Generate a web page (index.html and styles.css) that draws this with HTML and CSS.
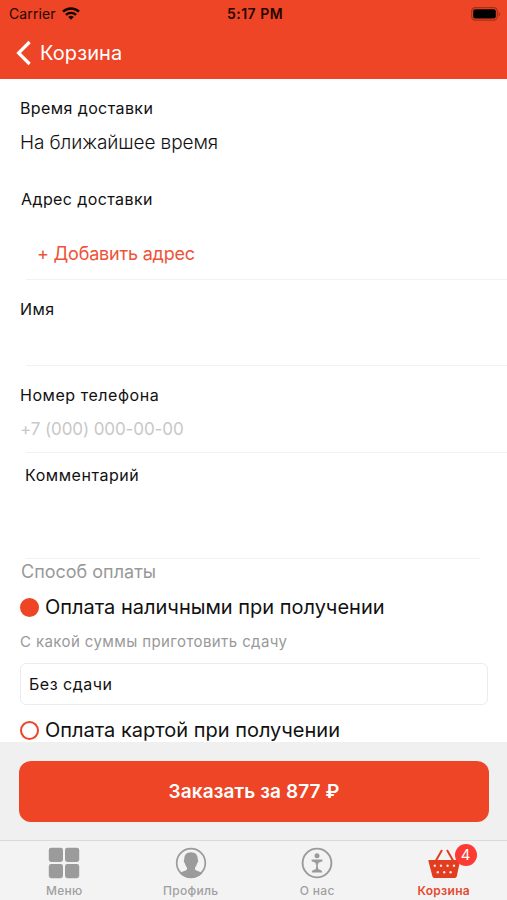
FILE: index.html
```html
<!DOCTYPE html>
<html lang="ru">
<head>
	<meta charset="UTF-8">
	<title>Корзина</title>
	<link rel="stylesheet" href="styles.css">
</head>
<body>
	<div class="app">
		<header class="header">
			<div class="status">
				<div class="carrier">
					<span>Carrier</span>
					<svg class="wifi" width="18" height="13" viewBox="0 0 18 13">
						<path d="M1 4.7a11.7 11.7 0 0 1 16 0" fill="none" stroke="#140300" stroke-width="2.5"/>
						<path d="M3.9 7.9a7.4 7.4 0 0 1 10.2 0" fill="none" stroke="#140300" stroke-width="2.3"/>
						<path d="M9 12.8L6.2 10a4 4 0 0 1 5.6 0z" fill="#140300"/>
					</svg>
				</div>
				<span class="time">5:17 PM</span>
				<svg class="battery" width="30" height="14" viewBox="0 0 30 14">
					<rect x="0.7" y="0.7" width="25.6" height="12.4" rx="3.6" fill="none" stroke="#a53018" stroke-width="1.2"/>
					<rect x="2.2" y="2.2" width="22.6" height="9.4" rx="2" fill="#000"/>
					<path d="M27.6 4.8c2 .8 2 3.6 0 4.4z" fill="#a53018"/>
				</svg>
			</div>
			<div class="nav">
				<svg class="back" width="16" height="26" viewBox="0 0 16 26">
					<path d="M13.6 2L2.6 13l11 11" fill="none" stroke="#fff" stroke-width="3.2"/>
				</svg>
				<span class="nav-title">Корзина</span>
			</div>
		</header>

		<main class="form">
			<section class="field field-time">
				<h2 class="label">Время доставки</h2>
				<p class="value">На ближайшее время</p>
			</section>
			<section class="field field-address">
				<h2 class="label">Адрес доставки</h2>
				<a class="add" href="#">+ Добавить адрес</a>
			</section>
			<section class="field field-name">
				<h2 class="label">Имя</h2>
			</section>
			<section class="field field-phone">
				<h2 class="label">Номер телефона</h2>
				<p class="placeholder">+7 (000) 000-00-00</p>
			</section>
			<section class="field field-comment">
				<h2 class="label">Комментарий</h2>
			</section>
			<section class="pay">
				<h2 class="pay-title">Способ оплаты</h2>
				<div class="option">
					<span class="radio radio-on"></span>
					<span>Оплата наличными при получении</span>
				</div>
				<p class="hint">С какой суммы приготовить сдачу</p>
				<div class="input"><span>Без сдачи</span></div>
				<div class="option option-last">
					<span class="radio"></span>
					<span>Оплата картой при получении</span>
				</div>
			</section>
		</main>

		<div class="order">
			<a class="order-btn" href="#">Заказать за 877 ₽</a>
		</div>

		<nav class="tabs">
			<a class="tab" href="#">
				<svg width="32" height="32" viewBox="0 0 32 32" fill="#9b9b9b">
					<rect x="0.8" y="0.8" width="14.2" height="14.2" rx="2.4"/>
					<rect x="17" y="0.8" width="14.2" height="14.2" rx="2.4"/>
					<rect x="0.8" y="17" width="14.2" height="14.2" rx="2.4"/>
					<rect x="17" y="17" width="14.2" height="14.2" rx="2.4"/>
				</svg>
				<span>Меню</span>
			</a>
			<a class="tab" href="#">
				<svg width="32" height="32" viewBox="0 0 32 32">
					<circle cx="16" cy="16" r="14.3" fill="none" stroke="#9b9b9b" stroke-width="1.7"/>
					<path d="M16 5.2c4.6 0 6.9 2.8 6.7 7 .8.7.5 3.2-.6 4-.4 1.900-1.200 3.200-2.100 4.200v2c1.500 1.600 5 1.800 7.200 3.800A15 15 0 0 1 16 31 15 15 0 0 1 4.800 26.200c2.200-2 5.700-2.200 7.200-3.800v-2c-.9-1-1.700-2.300-2.100-4.200-1.100-.8-1.400-3.300-.6-4-.2-4.200 2.100-7 6.700-7z" fill="#9b9b9b"/>
				</svg>
				<span>Профиль</span>
			</a>
			<a class="tab" href="#">
				<svg width="32" height="32" viewBox="0 0 32 32">
					<circle cx="16" cy="16" r="14.4" fill="none" stroke="#9b9b9b" stroke-width="1.9"/>
					<circle cx="16" cy="8.8" r="2.5" fill="#9b9b9b"/>
					<path d="M10.600 12.600h10.800v1.600l-3.800 1.600-.9 2.700.5 3.300c.8 1.200 3.900 1.200 3.900 3v.8H10.900v-.8c0-1.800 3.100-1.800 3.900-3l.5-3.300-.9-2.700-3.800-1.600z" fill="#9b9b9b"/>
				</svg>
				<span>О нас</span>
			</a>
			<a class="tab tab-active" href="#">
				<svg width="32" height="32" viewBox="0 0 32 32">
					<path d="M8 13.500L14 3M25 13.500L19 3" fill="none" stroke="#e33d20" stroke-width="2"/>
					<path d="M1 13h30.500q.8 0 .6.900l-3.300 15.400q-.4 1.700-2 1.700H6.400q-1.700 0-2-1.700L.4 13.900q-.2-.9.600-.9z" fill="#e33d20"/>
					<g fill="#f9e3df">
						<circle cx="6.8" cy="18.800" r="1.200"/>
						<circle cx="13" cy="18.800" r="1.200"/>
						<circle cx="19.600" cy="18.800" r="1.200"/>
						<circle cx="26" cy="18.800" r="1.200"/>
						<circle cx="9.800" cy="25.300" r="1.200"/>
						<circle cx="16.200" cy="25.300" r="1.200"/>
						<circle cx="22.600" cy="25.300" r="1.200"/>
					</g>
				</svg>
				<span>Корзина</span>
				<span class="badge">4</span>
			</a>
		</nav>
	</div>
</body>
</html>
```
FILE: styles.css
```css
* {
	box-sizing: border-box;
}
body {
	margin: 0;
	background: #fff;
	font-family: Inter, "Liberation Sans", sans-serif;
	color: #111;
}
h2, p {
	margin: 0;
	font-weight: 400;
}
a {
	text-decoration: none;
}
svg {
	display: block;
}
.app {
	width: 507px;
	height: 900px;
	display: flex;
	flex-direction: column;
	overflow: hidden;
}

/* шапка */
.header {
	height: 79px;
	flex: none;
	background: #ed4526;
}
.status {
	display: grid;
	grid-template-columns: 1fr auto 1fr;
	align-items: center;
	height: 27px;
	padding: 0 6px 0 9px;
	font-size: 14px;
	color: #240500;
}
.carrier {
	display: flex;
	align-items: center;
	gap: 6px;
	letter-spacing: .1px;
}
.time {
	font-weight: 600;
	letter-spacing: .5px;
}
.battery {
	justify-self: end;
}
.nav {
	display: flex;
	align-items: center;
	gap: 8px;
	height: 51px;
	padding-left: 16px;
	color: #fff;
}
.nav-title {
	font-size: 20px;
	letter-spacing: .1px;
}

/* форма */
.form {
	height: 663px;
	flex: none;
	overflow: hidden;
}
.field {
	padding-left: 20px;
}
.field-address,
.field-name,
.field-phone,
.field-comment {
	background: linear-gradient(#f2f2f2, #f2f2f2) 26px 100% / 100% 1px no-repeat;
}
.label {
	font-size: 16px;
	line-height: 24px;
	letter-spacing: .4px;
}
.field-time {
	height: 97px;
	padding-top: 17px;
}
.value {
	padding-top: 8px;
	font-size: 19px;
	font-weight: 300;
	line-height: 30px;
	letter-spacing: -.1px;
}
.field-address {
	height: 104px;
	padding-top: 11px;
	padding-left: 21px;
}
.add {
	display: block;
	padding: 28px 0 0 16px;
	font-size: 18px;
	line-height: 30px;
	letter-spacing: -.2px;
	color: #ee5338;
}
.field-name {
	height: 86px;
	padding-top: 17px;
}
.field-phone {
	height: 87px;
	padding-top: 17px;
}
.field-phone .label,
.field-comment .label {
	letter-spacing: .55px;
}
.placeholder {
	padding-top: 10px;
	font-size: 17px;
	line-height: 24px;
	letter-spacing: -.1px;
	color: #c8c8c8;
}
.field-comment {
	height: 106px;
	padding: 10px 0 0 25px;
	background-size: 454px 1px;
}
.pay {
	padding: 0 19px 0 20px;
}
.pay-title {
	padding-left: 1px;
	font-size: 18px;
	line-height: 25px;
	color: #999;
}
.option {
	display: flex;
	align-items: center;
	gap: 6px;
	height: 30px;
	margin-top: 8px;
	font-size: 20px;
}
.radio {
	width: 19px;
	height: 19px;
	border: 2px solid #ed4526;
	border-radius: 50%;
}
.radio-on {
	background: #ed4526;
}
.hint {
	margin-top: 8px;
	font-size: 15px;
	line-height: 24px;
	letter-spacing: .4px;
	color: #999;
}
.input {
	display: flex;
	align-items: center;
	height: 42px;
	margin-top: 9px;
	padding-left: 8px;
	border: 1px solid #ececec;
	border-radius: 6px;
	font-size: 16px;
	letter-spacing: .5px;
}
.option-last {
	margin-top: 10px;
}

/* кнопка заказа */
.order {
	height: 98px;
	flex: none;
	padding: 19px 18px 0 19px;
	background: #f0f0f0;
}
.order-btn {
	display: flex;
	align-items: center;
	justify-content: center;
	height: 61px;
	border-radius: 12px;
	background: #ed4526;
	color: #fff;
	font-size: 19px;
	font-weight: 600;
	letter-spacing: .1px;
}

/* нижнее меню */
.tabs {
	display: grid;
	grid-template-columns: repeat(4, 1fr);
	height: 60px;
	padding: 6px 0 0 1px;
	border-top: 1px solid #dadada;
	background: #f3f3f3;
}
.tab {
	position: relative;
	display: flex;
	flex-direction: column;
	align-items: center;
	gap: 4px;
	font-size: 12px;
	font-weight: 500;
	line-height: 16px;
	letter-spacing: .3px;
	color: #a0a0a0;
}
.tab-active {
	font-weight: 600;
	color: #e5492e;
}
.badge {
	position: absolute;
	top: -3px;
	left: 74px;
	width: 22px;
	height: 22px;
	border-radius: 50%;
	background: #fb3b34;
	color: #fff;
	font-size: 15px;
	font-weight: 400;
	line-height: 22px;
	letter-spacing: 0;
	text-align: center;
}
```
